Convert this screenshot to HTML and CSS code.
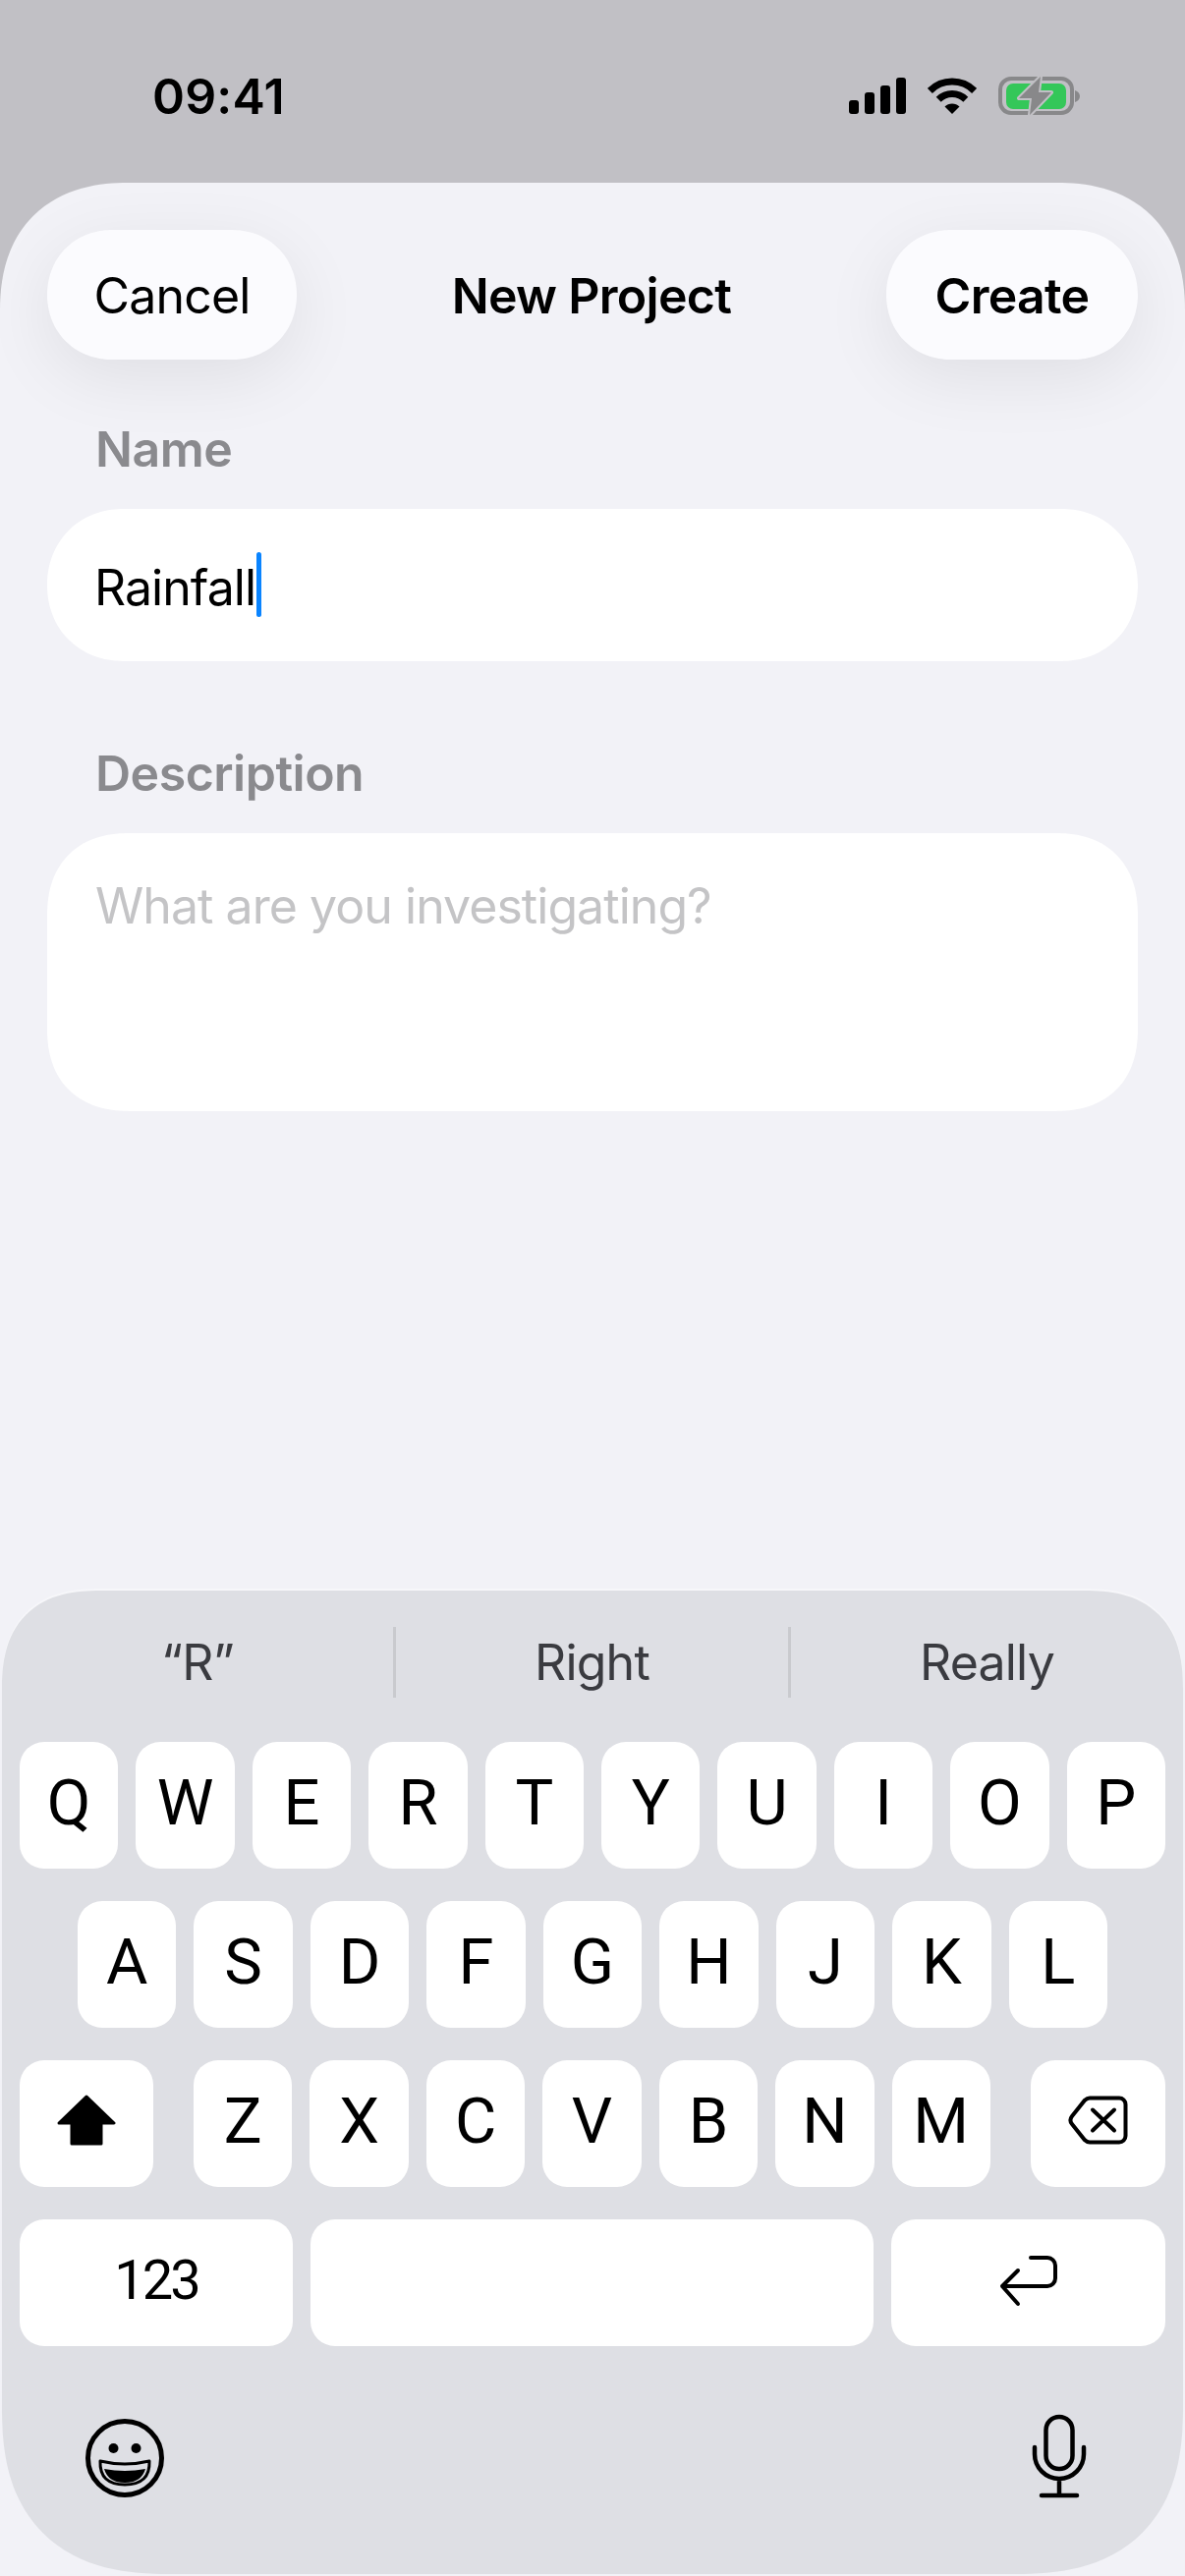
FILE: index.html
```html
<!DOCTYPE html>
<html>
    <head>
        <title>New Project</title>
        <link rel="stylesheet" href="styles.css">
    </head>
    <body>
        <div class="status">
            <div class="time">09:41</div>
            <div class="status-icons">
                <svg class="ic-signal" viewBox="0 0 58 37">
                    <rect x="0" y="23" width="10" height="14" rx="3"/>
                    <rect x="16" y="15" width="10" height="22" rx="3"/>
                    <rect x="32" y="8" width="10" height="29" rx="3"/>
                    <rect x="48" y="0" width="10" height="37" rx="3"/>
                </svg>
                <svg class="ic-wifi" viewBox="0 0 50 37">
                    <path d="M2.4 13.4A32 32 0 0 1 47.6 13.4" fill="none" stroke="#000" stroke-width="7"/>
                    <path d="M11.2 22.2A19.5 19.5 0 0 1 38.8 22.2" fill="none" stroke="#000" stroke-width="7"/>
                    <path d="M25 37L17.5 29.5A10.6 10.6 0 0 1 32.5 29.5Z"/>
                </svg>
                <svg class="ic-battery" viewBox="0 0 86 43">
                    <rect x="4" y="4" width="73" height="35" rx="11" fill="none" stroke="#88888a" stroke-width="4"/>
                    <rect x="10" y="9" width="61" height="26" rx="7" fill="#34c759"/>
                    <path d="M80 16c3 1 5 3 5 6s-2 5-5 6z" fill="#88888a"/>
                    <path d="M45 2L23 24H36L34 41L56 18H43Z" fill="#88888a" stroke="#c1c0c5" stroke-width="4" stroke-linejoin="round" paint-order="stroke"/>
                </svg>
            </div>
        </div>

        <div class="sheet">
            <div class="nav">
                <div class="nav-btn">Cancel</div>
                <div class="nav-title">New Project</div>
                <div class="nav-btn nav-btn-strong">Create</div>
            </div>

            <div class="field-label first">Name</div>
            <div class="input"><span class="input-text">Rainfall</span><span class="caret"></span></div>

            <div class="field-label">Description</div>
            <div class="input input-area"><span class="placeholder">What are you investigating?</span></div>

            <div class="keyboard">
                <div class="suggest">
                    <div class="suggest-item">“R”</div>
                    <div class="suggest-item">Right</div>
                    <div class="suggest-item">Really</div>
                </div>

                <div class="rows">
                    <div class="row">
                        <div class="key">Q</div><div class="key">W</div><div class="key">E</div><div class="key">R</div><div class="key">T</div>
                        <div class="key">Y</div><div class="key">U</div><div class="key">I</div><div class="key">O</div><div class="key">P</div>
                    </div>
                    <div class="row row-home">
                        <div class="key">A</div><div class="key">S</div><div class="key">D</div><div class="key">F</div><div class="key">G</div>
                        <div class="key">H</div><div class="key">J</div><div class="key">K</div><div class="key">L</div>
                    </div>
                    <div class="row">
                        <div class="key key-shift">
                            <svg class="ic-shift" viewBox="0 0 60 52">
                                <path d="M30 2L58 29H45V50H15V29H2Z" stroke="#000" stroke-width="3" stroke-linejoin="round"/>
                            </svg>
                        </div>
                        <div class="row-letters">
                            <div class="key">Z</div><div class="key">X</div><div class="key">C</div><div class="key">V</div>
                            <div class="key">B</div><div class="key">N</div><div class="key">M</div>
                        </div>
                        <div class="key key-delete">
                            <svg class="ic-delete" viewBox="0 0 61 50">
                                <path d="M22 2.5H52a6.5 6.5 0 0 1 6.500 6.500V41a6.500 6.500 0 0 1-6.500 6.500H22c-2 0-3.500-.8-5-2.200L4 29c-2-2.500-2-5.500 0-8L17 4.700c1.500-1.400 3-2.200 5-2.200Z" fill="none" stroke="#000" stroke-width="4"/>
                                <path d="M25 14.500L47 35.500M47 14.500L25 35.500" fill="none" stroke="#000" stroke-width="4" stroke-linecap="round"/>
                            </svg>
                        </div>
                    </div>
                    <div class="row">
                        <div class="key key-num">123</div>
                        <div class="key"></div>
                        <div class="key key-return">
                            <svg class="ic-return" viewBox="0 0 62 53">
                                <path d="M33 3H50a8 8 0 0 1 8 8V24a8 8 0 0 1-8 8H4M20 16L4 32L20 50" fill="none" stroke="#000" stroke-width="4" stroke-linecap="round" stroke-linejoin="round"/>
                            </svg>
                        </div>
                    </div>
                </div>

                <div class="kb-foot">
                    <svg class="ic-emoji" viewBox="0 0 80 80">
                        <circle cx="40" cy="40" r="37.500" fill="none" stroke="#000" stroke-width="5"/>
                        <circle cx="28.500" cy="30" r="5"/>
                        <circle cx="51.500" cy="30" r="5"/>
                        <path d="M15 43Q40 49 65 43Q66 67 40 67Q14 67 15 43Z" fill="none" stroke="#000" stroke-width="3" stroke-linejoin="round"/>
                        <path d="M19 51Q40 55 61 51Q57 65 40 65Q23 65 19 51Z"/>
                    </svg>
                    <svg class="ic-mic" viewBox="0 0 56 88">
                        <rect x="14.500" y="4" width="27" height="53" rx="13.500" fill="none" stroke="#000" stroke-width="4.500"/>
                        <path d="M3 35V42a25 25 0 0 0 50 0V35M28 67V84M10 84H46" fill="none" stroke="#000" stroke-width="4.500" stroke-linecap="round"/>
                    </svg>
                </div>
            </div>
        </div>
    </body>
</html>
```

FILE: styles.css
```css
*{
    box-sizing:border-box;
}
body{
    margin:0;
    width:1206px;
    height:2622px;
    overflow:hidden;
    background-color:#c1c0c5;
    font-family:"Inter","Liberation Sans",sans-serif;
    display:flex;
    flex-direction:column;
}
svg{
    display:block;
}

/* status bar */
.status{
    height:186px;
    flex:none;
    display:flex;
    justify-content:space-between;
    padding:66px 0 0 155px;
    color:#000;
}
.time{
    font-size:50px;
    line-height:64px;
    font-weight:600;
    letter-spacing:.2px;
}
.status-icons{
    display:flex;
    margin:13px 106px 0 0;
}
.ic-signal{
    width:58px;
    height:37px;
}
.ic-wifi{
    width:50px;
    height:37px;
    margin-left:22px;
}
.ic-battery{
    width:86px;
    height:43px;
    margin:-3px 0 0 20px;
}

/* sheet */
.sheet{
    flex:1;
    display:flex;
    flex-direction:column;
    background-color:#f2f2f7;
    border-radius:130px 130px 0 0;
    corner-shape:superellipse(1.2);
}
.nav{
    display:flex;
    justify-content:space-between;
    align-items:center;
    margin:48px 48px 0;
    height:132px;
}
.nav-btn{
    width:254px;
    height:132px;
    padding-top:1px;
    border-radius:66px;
    corner-shape:superellipse(1.05);
    background-color:#fbfbfe;
    box-shadow:0 18px 70px rgba(0,0,0,.08);
    font-size:50px;
    line-height:132px;
    text-align:center;
    letter-spacing:-.8px;
}
.nav-btn-strong{
    width:256px;
    font-weight:600;
    letter-spacing:-.7px;
}
.nav-title{
    padding-top:1px;
    font-size:50px;
    font-weight:600;
    letter-spacing:-.7px;
}
.field-label{
    margin:84px 48px 31px;
    padding-left:49px;
    font-size:50px;
    line-height:60px;
    font-weight:600;
    letter-spacing:-.5px;
    color:#8a8a8e;
}
.field-label.first{
    margin-top:61px;
}
.input{
    margin:0 48px;
    height:155px;
    padding-left:49px;
    background-color:#fff;
    border-radius:77px;
    corner-shape:superellipse(1.05);
    font-size:50px;
    line-height:161px;
    letter-spacing:-.95px;
    color:#000;
}
.input-area{
    height:283px;
    padding-top:45px;
    border-radius:84px;
    corner-shape:superellipse(1.2);
    line-height:58px;
}
.input-text{
    margin-left:-1px;
}
.placeholder{
    color:#c4c4c6;
}
.caret{
    display:inline-block;
    width:5px;
    height:66px;
    margin-left:1px;
    border-radius:3px;
    background-color:#0a84ff;
    vertical-align:-12px;
}

/* keyboard */
.keyboard{
    margin:auto 2px 2px;
    height:1001px;
    background-color:#dedfe4;
    border-radius:100px 100px 170px 170px;
    corner-shape:superellipse(1.3);
    box-shadow:0 -2px 0 #f7f7fa;
}
.suggest{
    display:flex;
    padding:37px 0 0;
}
.suggest-item{
    flex:1;
    height:72px;
    font-size:50px;
    line-height:72px;
    text-align:center;
    letter-spacing:-.8px;
    color:#3a3b40;
}
.suggest-item:first-child{
    flex:0 0 398px;
}
.suggest-item:nth-child(2){
    flex:0 0 402px;
}
.suggest-item + .suggest-item{
    border-left:3px solid #c9cace;
}
.rows{
    display:flex;
    flex-direction:column;
    gap:33px;
    margin-top:45px;
    padding:0 18px;
}
.row,.row-letters{
    display:flex;
    gap:18px;
}
.row-home{
    padding:0 59px;
}
.row-letters{
    flex:1;
    margin:0 23px;
}
.key{
    flex:1;
    height:129px;
    display:flex;
    justify-content:center;
    align-items:center;
    padding-bottom:6px;
    background-color:#fff;
    border-radius:25px;
    font-family:"Roboto","Liberation Sans",sans-serif;
    font-size:65px;
    color:#000;
}
.key-shift{
    flex:0 0 136px;
    padding:0;
}
.key-delete{
    flex:0 0 137px;
    padding:0;
}
.key-num{
    flex:0 0 278px;
    font-size:56px;
    letter-spacing:-3px;
}
.key-return{
    flex:0 0 279px;
    padding:0;
}
.ic-shift{
    width:60px;
    height:52px;
    margin-top:-8px;
}
.ic-delete{
    width:61px;
    height:50px;
    margin-top:-8px;
}
.ic-return{
    width:62px;
    height:53px;
    margin:-4px 0 0 0;
}
.kb-foot{
    display:flex;
    justify-content:space-between;
    padding:68px 98px 0 85px;
}
.ic-emoji{
    width:80px;
    height:80px;
    margin-top:6px;
}
.ic-mic{
    width:56px;
    height:88px;
}
```
